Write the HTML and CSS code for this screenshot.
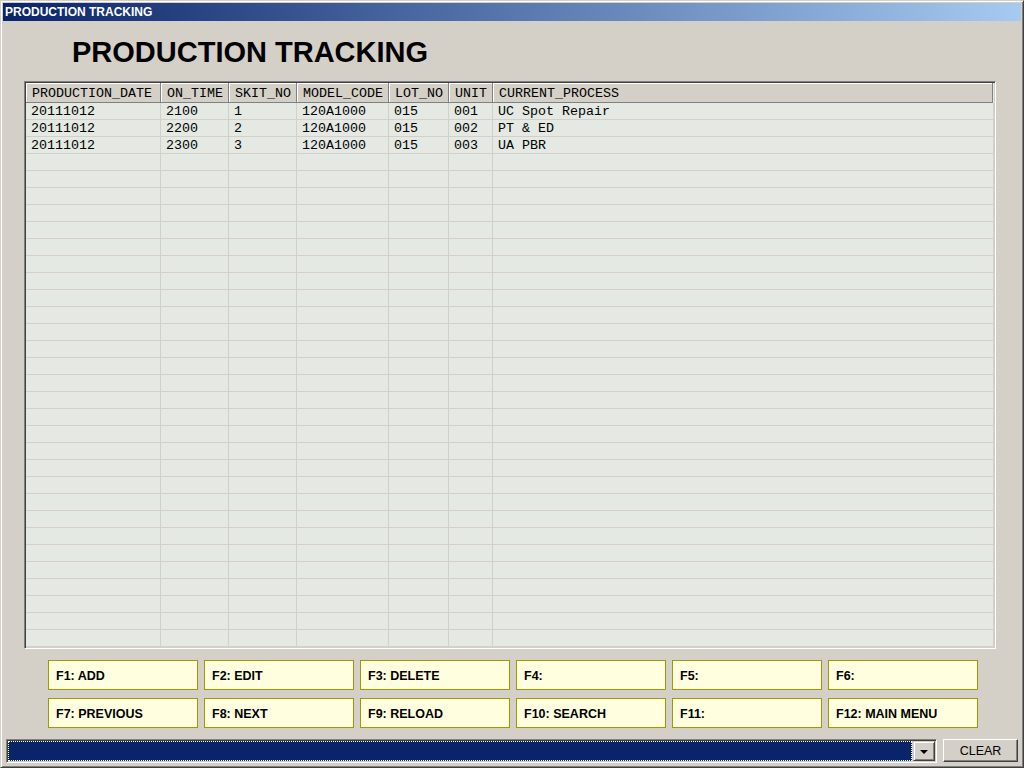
FILE: index.html
```html
<!DOCTYPE html>
<html>
<head>
<meta charset="utf-8">
<title>PRODUCTION TRACKING</title>
<link rel="stylesheet" href="styles.css">
</head>
<body>
<div class="window">
  <div class="titlebar">PRODUCTION TRACKING</div>
  <h1 class="heading">PRODUCTION TRACKING</h1>
  <div class="grid">
    <div class="row head">
      <div class="cell">PRODUCTION_DATE</div><div class="cell">ON_TIME</div><div class="cell">SKIT_NO</div><div class="cell">MODEL_CODE</div><div class="cell">LOT_NO</div><div class="cell">UNIT</div><div class="cell">CURRENT_PROCESS</div>
    </div>
    <div class="row"><div class="cell">20111012</div><div class="cell">2100</div><div class="cell">1</div><div class="cell">120A1000</div><div class="cell">015</div><div class="cell">001</div><div class="cell">UC Spot Repair</div></div>
    <div class="row"><div class="cell">20111012</div><div class="cell">2200</div><div class="cell">2</div><div class="cell">120A1000</div><div class="cell">015</div><div class="cell">002</div><div class="cell">PT &amp; ED</div></div>
    <div class="row"><div class="cell">20111012</div><div class="cell">2300</div><div class="cell">3</div><div class="cell">120A1000</div><div class="cell">015</div><div class="cell">003</div><div class="cell">UA PBR</div></div>
    <!-- 1 --><div class="row"><div class="cell"></div><div class="cell"></div><div class="cell"></div><div class="cell"></div><div class="cell"></div><div class="cell"></div><div class="cell"></div></div>
    <!-- 2 --><div class="row"><div class="cell"></div><div class="cell"></div><div class="cell"></div><div class="cell"></div><div class="cell"></div><div class="cell"></div><div class="cell"></div></div>
    <!-- 3 --><div class="row"><div class="cell"></div><div class="cell"></div><div class="cell"></div><div class="cell"></div><div class="cell"></div><div class="cell"></div><div class="cell"></div></div>
    <!-- 4 --><div class="row"><div class="cell"></div><div class="cell"></div><div class="cell"></div><div class="cell"></div><div class="cell"></div><div class="cell"></div><div class="cell"></div></div>
    <!-- 5 --><div class="row"><div class="cell"></div><div class="cell"></div><div class="cell"></div><div class="cell"></div><div class="cell"></div><div class="cell"></div><div class="cell"></div></div>
    <!-- 6 --><div class="row"><div class="cell"></div><div class="cell"></div><div class="cell"></div><div class="cell"></div><div class="cell"></div><div class="cell"></div><div class="cell"></div></div>
    <!-- 7 --><div class="row"><div class="cell"></div><div class="cell"></div><div class="cell"></div><div class="cell"></div><div class="cell"></div><div class="cell"></div><div class="cell"></div></div>
    <!-- 8 --><div class="row"><div class="cell"></div><div class="cell"></div><div class="cell"></div><div class="cell"></div><div class="cell"></div><div class="cell"></div><div class="cell"></div></div>
    <!-- 9 --><div class="row"><div class="cell"></div><div class="cell"></div><div class="cell"></div><div class="cell"></div><div class="cell"></div><div class="cell"></div><div class="cell"></div></div>
    <!-- 10 --><div class="row"><div class="cell"></div><div class="cell"></div><div class="cell"></div><div class="cell"></div><div class="cell"></div><div class="cell"></div><div class="cell"></div></div>
    <!-- 11 --><div class="row"><div class="cell"></div><div class="cell"></div><div class="cell"></div><div class="cell"></div><div class="cell"></div><div class="cell"></div><div class="cell"></div></div>
    <!-- 12 --><div class="row"><div class="cell"></div><div class="cell"></div><div class="cell"></div><div class="cell"></div><div class="cell"></div><div class="cell"></div><div class="cell"></div></div>
    <!-- 13 --><div class="row"><div class="cell"></div><div class="cell"></div><div class="cell"></div><div class="cell"></div><div class="cell"></div><div class="cell"></div><div class="cell"></div></div>
    <!-- 14 --><div class="row"><div class="cell"></div><div class="cell"></div><div class="cell"></div><div class="cell"></div><div class="cell"></div><div class="cell"></div><div class="cell"></div></div>
    <!-- 15 --><div class="row"><div class="cell"></div><div class="cell"></div><div class="cell"></div><div class="cell"></div><div class="cell"></div><div class="cell"></div><div class="cell"></div></div>
    <!-- 16 --><div class="row"><div class="cell"></div><div class="cell"></div><div class="cell"></div><div class="cell"></div><div class="cell"></div><div class="cell"></div><div class="cell"></div></div>
    <!-- 17 --><div class="row"><div class="cell"></div><div class="cell"></div><div class="cell"></div><div class="cell"></div><div class="cell"></div><div class="cell"></div><div class="cell"></div></div>
    <!-- 18 --><div class="row"><div class="cell"></div><div class="cell"></div><div class="cell"></div><div class="cell"></div><div class="cell"></div><div class="cell"></div><div class="cell"></div></div>
    <!-- 19 --><div class="row"><div class="cell"></div><div class="cell"></div><div class="cell"></div><div class="cell"></div><div class="cell"></div><div class="cell"></div><div class="cell"></div></div>
    <!-- 20 --><div class="row"><div class="cell"></div><div class="cell"></div><div class="cell"></div><div class="cell"></div><div class="cell"></div><div class="cell"></div><div class="cell"></div></div>
    <!-- 21 --><div class="row"><div class="cell"></div><div class="cell"></div><div class="cell"></div><div class="cell"></div><div class="cell"></div><div class="cell"></div><div class="cell"></div></div>
    <!-- 22 --><div class="row"><div class="cell"></div><div class="cell"></div><div class="cell"></div><div class="cell"></div><div class="cell"></div><div class="cell"></div><div class="cell"></div></div>
    <!-- 23 --><div class="row"><div class="cell"></div><div class="cell"></div><div class="cell"></div><div class="cell"></div><div class="cell"></div><div class="cell"></div><div class="cell"></div></div>
    <!-- 24 --><div class="row"><div class="cell"></div><div class="cell"></div><div class="cell"></div><div class="cell"></div><div class="cell"></div><div class="cell"></div><div class="cell"></div></div>
    <!-- 25 --><div class="row"><div class="cell"></div><div class="cell"></div><div class="cell"></div><div class="cell"></div><div class="cell"></div><div class="cell"></div><div class="cell"></div></div>
    <!-- 26 --><div class="row"><div class="cell"></div><div class="cell"></div><div class="cell"></div><div class="cell"></div><div class="cell"></div><div class="cell"></div><div class="cell"></div></div>
    <!-- 27 --><div class="row"><div class="cell"></div><div class="cell"></div><div class="cell"></div><div class="cell"></div><div class="cell"></div><div class="cell"></div><div class="cell"></div></div>
    <!-- 28 --><div class="row"><div class="cell"></div><div class="cell"></div><div class="cell"></div><div class="cell"></div><div class="cell"></div><div class="cell"></div><div class="cell"></div></div>
    <!-- 29 --><div class="row"><div class="cell"></div><div class="cell"></div><div class="cell"></div><div class="cell"></div><div class="cell"></div><div class="cell"></div><div class="cell"></div></div>
  </div>
  <div class="fkeys">
    <div class="fkey">F1: ADD</div>
    <div class="fkey">F2: EDIT</div>
    <div class="fkey">F3: DELETE</div>
    <div class="fkey">F4:</div>
    <div class="fkey">F5:</div>
    <div class="fkey">F6:</div>
    <div class="fkey">F7: PREVIOUS</div>
    <div class="fkey">F8: NEXT</div>
    <div class="fkey">F9: RELOAD</div>
    <div class="fkey">F10: SEARCH</div>
    <div class="fkey">F11:</div>
    <div class="fkey">F12: MAIN MENU</div>
  </div>
  <div class="status">
    <div class="combo">
      <div class="combo-field"></div>
      <div class="combo-btn"><span class="arrow"></span></div>
    </div>
    <div class="clear-btn">CLEAR</div>
  </div>
</div>
</body>
</html>
```
FILE: styles.css
```css
* { box-sizing: border-box; }
html, body { margin: 0; padding: 0; }
body {
  background: #d4d0c8;
  font-family: "Liberation Sans", Arial, sans-serif;
  width: 1024px;
  height: 768px;
  overflow: hidden;
}
.window {
  width: 1024px;
  height: 768px;
  border: 1px solid;
  border-color: #d4d0c8 #404040 #404040 #d4d0c8;
  box-shadow: inset 1px 1px #fff, inset -1px -1px #808080;
  padding: 2px;
  display: flex;
  flex-direction: column;
  background: #d4d0c8;
}
.titlebar {
  height: 18px;
  line-height: 18px;
  padding-left: 2px;
  color: #fff;
  font-weight: bold;
  font-size: 12px;
  background: linear-gradient(to right, #0a246a, #a6caf0);
  flex: none;
}
.heading {
  margin: 0;
  padding: 15px 0 0 69px;
  font-size: 29px;
  line-height: 33px;
  font-weight: bold;
  color: #000;
  flex: none;
}
.grid {
  margin: 12px 0 0 21px;
  width: 972px;
  height: 568px;
  flex: none;
  border: 1px solid;
  border-color: #808080 #fff #fff #808080;
  box-shadow: inset 1px 1px #404040, inset -1px -1px #d4d0c8;
  padding: 1px;
  background: #e4e9e3;
  font-family: "Liberation Mono", "Courier New", monospace;
  font-size: 13.33px;
  color: #000;
  overflow: hidden;
}
.row {
  display: grid;
  grid-template-columns: 135px 68px 68px 92px 60px 44px 1fr;
  height: 17px;
}
.cell {
  border-right: 1px solid #d4d0c8;
  border-bottom: 1px solid #d4d0c8;
  padding: 1px 0 0 5px;
  line-height: 15px;
  white-space: pre;
  overflow: hidden;
}
.row.head {
  height: 20px;
}
.row.head .cell {
  background: #d4d0c8;
  border-right: 1px solid #808080;
  border-bottom: 1px solid #808080;
  box-shadow: inset 1px 1px #fff;
  padding: 2px 0 0 6px;
  line-height: 17px;
}
.row.head .cell:last-child {
  margin-right: 1px;
}
.fkeys {
  margin: 11px 0 0 45px;
  display: grid;
  grid-template-columns: repeat(6, 150px);
  grid-auto-rows: 30px;
  column-gap: 6px;
  row-gap: 8px;
  flex: none;
}
.fkey {
  background: #ffffe0;
  border: 1px solid #9c9c00;
  font-weight: bold;
  font-size: 12.5px;
  color: #000;
  padding: 1px 0 0 7px;
  display: flex;
  align-items: center;
}
.status {
  margin: 11px 0 0 3px;
  display: flex;
  gap: 6px;
  flex: none;
}
.combo {
  width: 931px;
  height: 24px;
  border: 1px solid;
  border-color: #808080 #fff #fff #808080;
  box-shadow: inset 1px 1px #404040, inset -1px -1px #d4d0c8;
  padding: 1px;
  display: flex;
  background: #d4d0c8;
}
.combo-field {
  flex: 1;
  background: #0a246a;
  border: 1px dotted #fffff0;
  margin-right: 1px;
}
.combo-btn {
  width: 22px;
  height: 20px;
  border: 1px solid;
  border-color: #d4d0c8 #404040 #404040 #d4d0c8;
  box-shadow: inset 1px 1px #fff, inset -1px -1px #808080;
  background: #d4d0c8;
  display: flex;
  align-items: center;
  justify-content: center;
}
.arrow {
  width: 0;
  height: 0;
  border-left: 4px solid transparent;
  border-right: 4px solid transparent;
  border-top: 4px solid #000;
  margin-top: 1px;
}
.clear-btn {
  width: 75px;
  height: 23px;
  border: 1px solid;
  border-color: #fff #404040 #404040 #fff;
  box-shadow: inset -1px -1px #808080;
  background: #d4d0c8;
  font-size: 12.5px;
  color: #000;
  display: flex;
  align-items: center;
  justify-content: center;
}
```
